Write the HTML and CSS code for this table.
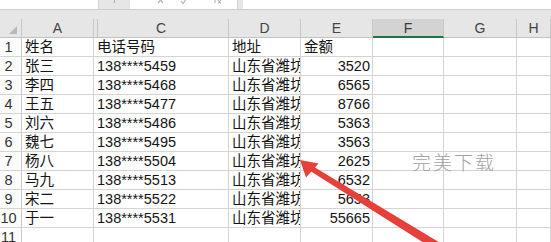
FILE: index.html
```html
<!DOCTYPE html>
<html lang="zh-CN">
<head>
<meta charset="utf-8">
<title>Sheet</title>
<link rel="stylesheet" href="styles.css">
</head>
<body>
<div class="topbar">
  <div class="box namebox"></div>
  <div class="gap"><span class="grip"></span></div>
  <div class="box fxbox">
    <svg class="fxicons" width="108" height="9" viewBox="0 0 108 9">
      <path d="M28 -3 L33 3 M33 -3 L28 3" stroke="#b4b4b4" stroke-width="1.2" fill="none"/>
      <path d="M51 1 L53 3.5 L57 -2" stroke="#b4b4b4" stroke-width="1.2" fill="none"/>
      <path d="M85 -2 L85 3 M88 0 L91 3.5 M91 0 L88 3.5" stroke="#b4b4b4" stroke-width="1.1" fill="none"/>
    </svg>
  </div>
  <div class="gap2"></div>
  <div class="box formula"></div>
</div>
<div class="band"></div>
<div class="sheet">
  <div class="c h corner"><span class="tri"></span></div>
  <div class="c h">A</div>
  <div class="c h hidden-b">C</div>
  <div class="c h">D</div>
  <div class="c h">E</div>
  <div class="c h sel">F</div>
  <div class="c h">G</div>
  <div class="c h">H</div>

  <div class="c rh">1</div><div class="c">姓名</div><div class="c">电话号码</div><div class="c">地址</div><div class="c">金额</div><div class="c"></div><div class="c"></div><div class="c"></div>
  <div class="c rh">2</div><div class="c">张三</div><div class="c">138****5459</div><div class="c">山东省潍坊</div><div class="c n">3520</div><div class="c"></div><div class="c"></div><div class="c"></div>
  <div class="c rh">3</div><div class="c">李四</div><div class="c">138****5468</div><div class="c">山东省潍坊</div><div class="c n">6565</div><div class="c"></div><div class="c"></div><div class="c"></div>
  <div class="c rh">4</div><div class="c">王五</div><div class="c">138****5477</div><div class="c">山东省潍坊</div><div class="c n">8766</div><div class="c"></div><div class="c"></div><div class="c"></div>
  <div class="c rh">5</div><div class="c">刘六</div><div class="c">138****5486</div><div class="c">山东省潍坊</div><div class="c n">5363</div><div class="c"></div><div class="c"></div><div class="c"></div>
  <div class="c rh">6</div><div class="c">魏七</div><div class="c">138****5495</div><div class="c">山东省潍坊</div><div class="c n">3563</div><div class="c"></div><div class="c"></div><div class="c"></div>
  <div class="c rh">7</div><div class="c">杨八</div><div class="c">138****5504</div><div class="c">山东省潍坊</div><div class="c n">2625</div><div class="c"></div><div class="c"></div><div class="c"></div>
  <div class="c rh">8</div><div class="c">马九</div><div class="c">138****5513</div><div class="c">山东省潍坊</div><div class="c n">6532</div><div class="c"></div><div class="c"></div><div class="c"></div>
  <div class="c rh">9</div><div class="c">宋二</div><div class="c">138****5522</div><div class="c">山东省潍坊</div><div class="c n">5653</div><div class="c"></div><div class="c"></div><div class="c"></div>
  <div class="c rh">10</div><div class="c">于一</div><div class="c">138****5531</div><div class="c">山东省潍坊</div><div class="c n">55665</div><div class="c"></div><div class="c"></div><div class="c"></div>
  <div class="c rh">11</div><div class="c"></div><div class="c"></div><div class="c"></div><div class="c"></div><div class="c"></div><div class="c"></div><div class="c"></div>
</div>
<div class="watermark">完美下载</div>
<svg class="arrow" width="551" height="242" viewBox="0 0 551 242">
  <polygon points="312.5,166 442,244 437.5,251.5 309.5,170.5" fill="#e5403a"/>
  <polygon points="300,160 318.5,163.5 306,177.5" fill="#e5403a"/>
</svg>
</body>
</html>
```

FILE: styles.css
```css
html, body {
  margin: 0;
  padding: 0;
}
body {
  width: 551px;
  height: 242px;
  overflow: hidden;
  position: relative;
  background: #ffffff;
  font-family: "Liberation Sans", "Noto Sans CJK SC", sans-serif;
}
.topbar {
  display: flex;
  height: 10px;
  box-sizing: border-box;
  background: #e6e6e6;
  border-bottom: 1px solid #cdcdcd;
}
.box {
  background: #ffffff;
  height: 9px;
}
.namebox {
  width: 99px;
  box-sizing: border-box;
  border-right: 1px solid #d2d2d2;
}
.gap {
  width: 31px;
  position: relative;
}
.grip {
  position: absolute;
  left: 15px;
  top: 0;
  width: 1px;
  height: 3px;
  background: #a8a8a8;
}
.fxbox {
  width: 108px;
  box-sizing: border-box;
  border-right: 1px solid #d2d2d2;
}
.fxicons {
  display: block;
}
.gap2 {
  width: 5px;
}
.formula {
  flex: 1;
}
.band {
  height: 9px;
  background: #e6e6e6;
}
.sheet {
  display: grid;
  grid-template-columns: 22px 72px 135px 72px 72px 71px 73px 1fr;
  grid-auto-rows: 19px;
}
.c {
  box-sizing: border-box;
  border-right: 1px solid #d4d4d4;
  border-bottom: 1px solid #d4d4d4;
  padding: 0 3px;
  font-size: 14.5px;
  line-height: 18px;
  white-space: nowrap;
  overflow: hidden;
  color: #141414;
}
.n {
  text-align: right;
  padding-right: 2px;
}
.h {
  background: #e6e6e6;
  color: #444444;
  text-align: center;
  font-size: 14px;
  border-right-color: #c8c8c8;
  border-bottom-color: #c2c2c2;
  padding: 0;
}
.hidden-b {
  box-shadow: inset 3px 0 0 #e6e6e6, inset 4px 0 0 #c4c4c4;
}
.sel {
  background: #d3d3d3;
  border-bottom: 2px solid #217346;
  color: #3a3a3a;
}
.corner {
  position: relative;
}
.tri {
  position: absolute;
  right: 4px;
  bottom: 3px;
  width: 0;
  height: 0;
  border-left: 8px solid transparent;
  border-bottom: 8px solid #b9b9b9;
}
.rh {
  background: #fcfcfc;
  color: #333333;
  text-align: center;
  padding: 0 4px 0 0;
  font-size: 14.5px;
  border-right-color: #c8c8c8;
}
.watermark {
  position: absolute;
  left: 412px;
  top: 150px;
  font-family: "Noto Sans CJK SC", sans-serif;
  font-size: 19px;
  line-height: 24px;
  letter-spacing: 2px;
  color: #a2a2a2;
  font-weight: 300;
}
.arrow {
  position: absolute;
  left: 0;
  top: 0;
  pointer-events: none;
}
```
